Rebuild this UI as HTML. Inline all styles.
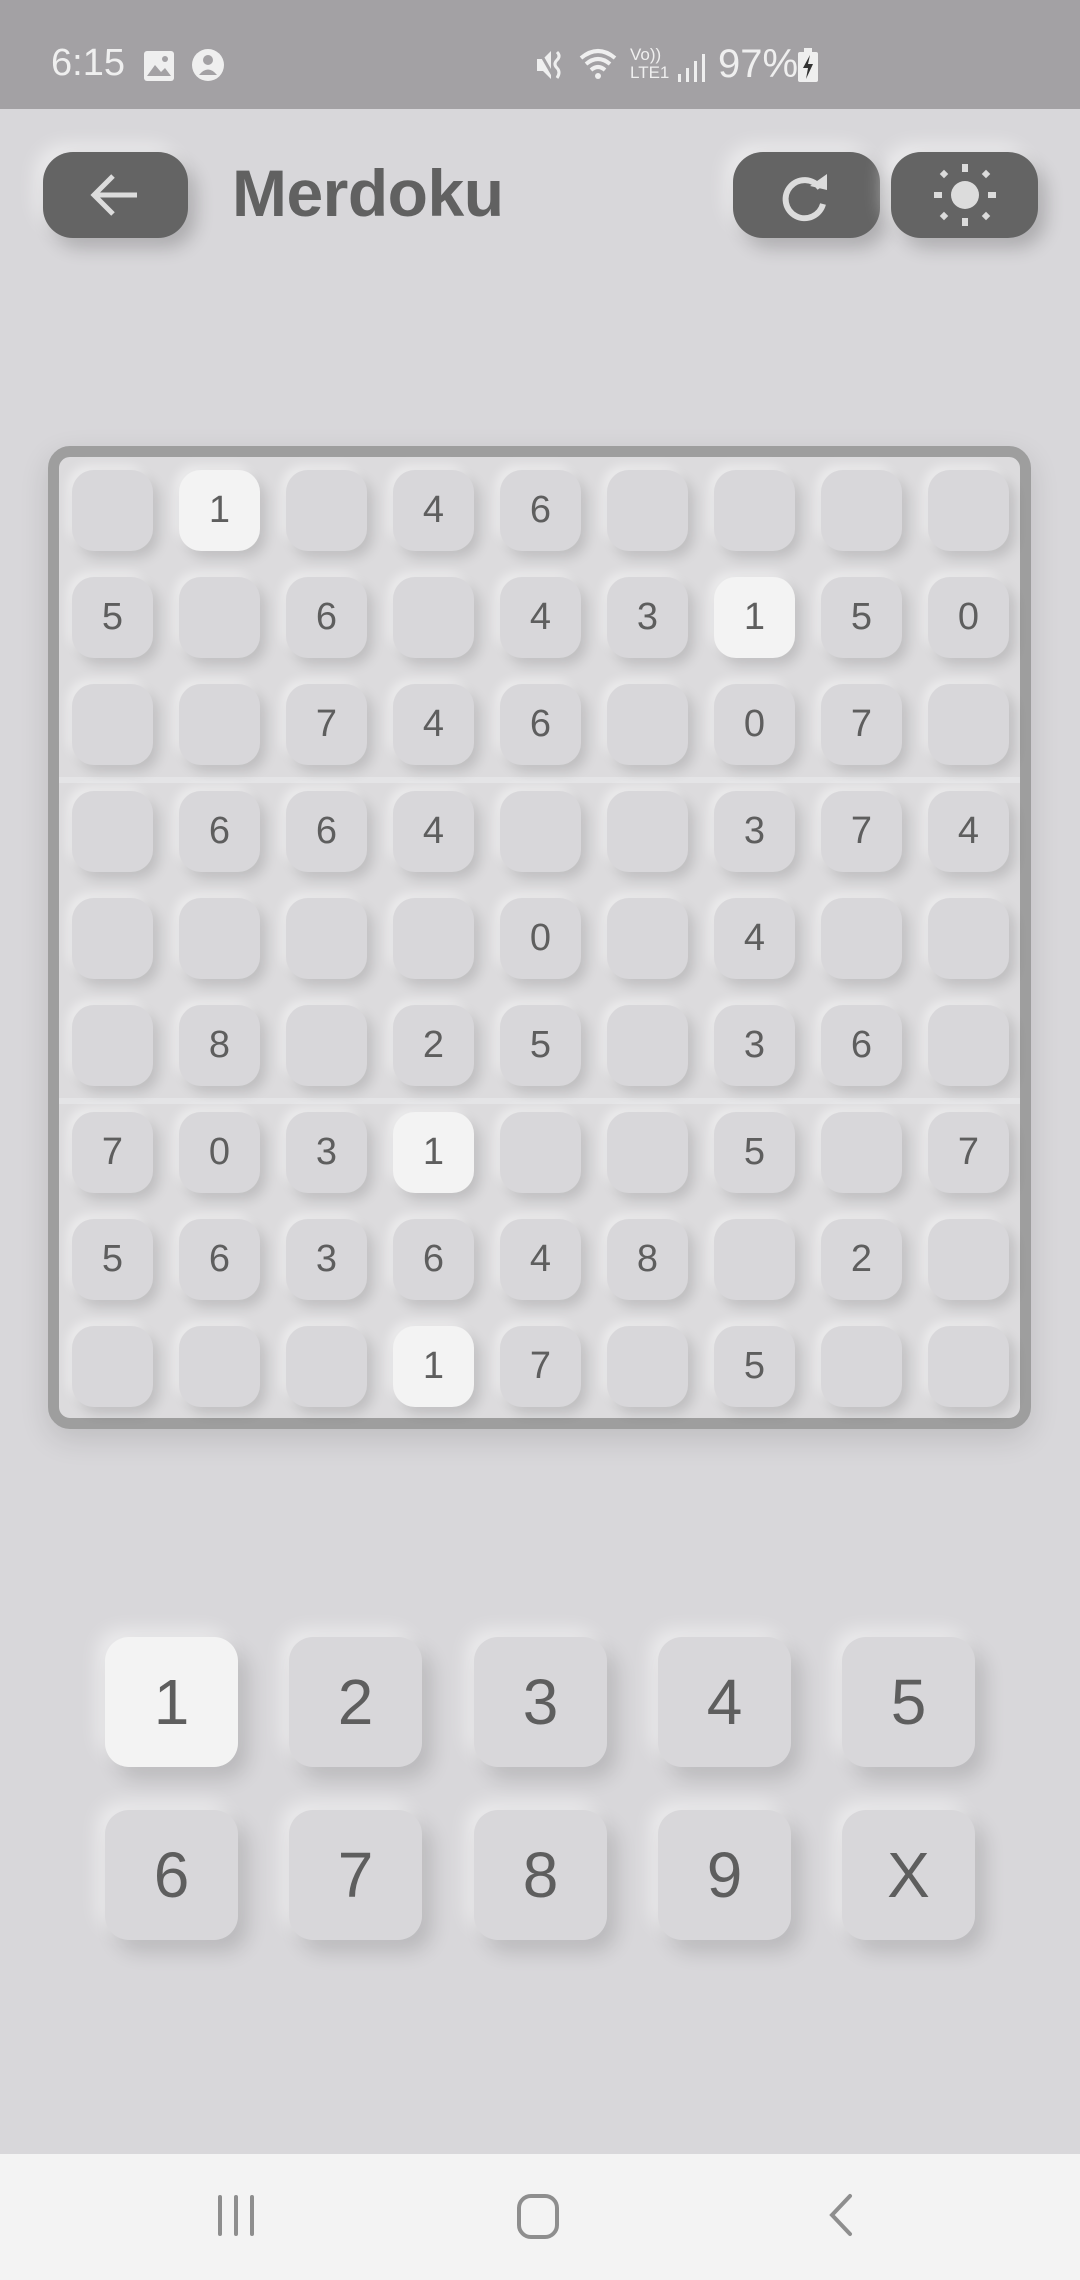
<!DOCTYPE html>
<html><head><meta charset="utf-8"><style>
*{margin:0;padding:0;box-sizing:border-box}
body{width:1080px;height:2280px;background:#d8d7da;position:relative;overflow:hidden;font-family:"Liberation Sans",Roboto,sans-serif;color:#616161}
.sb{position:absolute;left:0;top:0;width:1080px;height:109px;background:#a3a1a4;color:#efefef}
.hb{position:absolute;background:#646464;border-radius:30px;box-shadow:8px 10px 18px rgba(0,0,0,.2),-8px -8px 18px rgba(255,255,255,.5)}
.title{position:absolute;left:232px;top:155px;font-size:66px;font-weight:bold;color:#616161;letter-spacing:-0.5px}
.board{position:absolute;left:48px;top:446px;width:983px;height:983px;border:11px solid #9e9e9e;border-radius:22px;background:#dcdbdd;box-shadow:0 10px 30px rgba(0,0,0,.12)}
.sep{position:absolute;left:0;width:961px;height:6px;background:#e4e4e6}
.c{position:absolute;width:81px;height:81px;border-radius:22px;background:#d8d7da;box-shadow:6px 7px 12px rgba(0,0,0,.13),-5px -5px 10px rgba(255,255,255,.45);font-size:38px;display:flex;align-items:center;justify-content:center;color:#5e5e5e}
.c.w{background:#f3f3f3}
.k{position:absolute;width:133px;height:130px;border-radius:24px;background:#d8d7da;box-shadow:10px 12px 20px rgba(0,0,0,.14),-8px -8px 18px rgba(255,255,255,.5);font-size:64px;display:flex;align-items:center;justify-content:center;color:#5e5e5e}
.k.w{background:#f3f3f3}
.nav{position:absolute;left:0;top:2154px;width:1080px;height:126px;background:#f3f3f3}
</style></head><body>
<div class="sb">
<div style="position:absolute;left:51px;top:42px;font-size:38px;">6:15</div>
<svg style="position:absolute;left:143px;top:50px" width="32" height="32" viewBox="0 0 32 32"><rect x="1" y="1" width="30" height="30" rx="3" fill="#efefef"/><path d="M4 26 L12 15 L18 22 L22 18 L28 26Z" fill="#a3a1a4"/><circle cx="22" cy="9" r="3" fill="#a3a1a4"/></svg>
<svg style="position:absolute;left:191px;top:48px" width="34" height="34" viewBox="0 0 34 34"><circle cx="17" cy="17" r="16" fill="#efefef"/><circle cx="17" cy="12" r="5" fill="#a3a1a4"/><path d="M8 27 Q17 16 26 27Z" fill="#a3a1a4"/></svg>
<svg style="position:absolute;left:535px;top:48px" width="34" height="34" viewBox="0 0 34 34"><path d="M2 11 H8 L16 3 V31 L8 23 H2Z" fill="#efefef"/><path d="M4 3 L20 31" stroke="#a3a1a4" stroke-width="3"/><path d="M22 4 Q26 8 22 12 Q18 16 22 20 Q26 24 22 30" stroke="#efefef" stroke-width="3" fill="none"/></svg>
<svg style="position:absolute;left:578px;top:46px" width="42" height="38" viewBox="0 0 42 38"><path d="M3 12 Q20 -2 37 12 M8 18 Q20 8 32 18 M13 24 Q20 18 27 24" stroke="#efefef" stroke-width="4" fill="none"/><circle cx="20" cy="30" r="3" fill="#efefef"/></svg>
<div style="position:absolute;left:630px;top:46px;font-size:17px;line-height:18px">Vo))<br>LTE1</div>
<svg style="position:absolute;left:676px;top:52px" width="30" height="30" viewBox="0 0 30 30"><rect x="2" y="22" width="3" height="8" fill="#efefef"/><rect x="10" y="16" width="3" height="14" fill="#efefef"/><rect x="18" y="9" width="3" height="21" fill="#efefef"/><rect x="26" y="2" width="3" height="28" fill="#efefef"/></svg>
<div style="position:absolute;left:718px;top:42px;font-size:40px">97%</div>
<svg style="position:absolute;left:797px;top:48px" width="22" height="34" viewBox="0 0 22 34"><rect x="7" y="0" width="8" height="4" fill="#efefef"/><rect x="1" y="4" width="20" height="30" rx="2" fill="#efefef"/><path d="M13 7 L6 20 L11 20 L9 31 L16 16 L11 16Z" fill="#333"/></svg>
</div>

<div class="hb" style="left:43px;top:152px;width:145px;height:86px"><svg width="145" height="86" viewBox="0 0 145 86"><path d="M94 43 H52 M70 24 L51 43 L70 62" stroke="#dcdcdc" stroke-width="5" fill="none"/></svg></div>
<div class="title">Merdoku</div>
<div class="hb" style="left:733px;top:152px;width:147px;height:86px"><svg width="147" height="86" viewBox="0 0 147 86"><path d="M87 36 A19 19 0 1 0 90 52" stroke="#dcdcdc" stroke-width="6" fill="none"/><path d="M77 34 L94 22 L94 38Z" fill="#dcdcdc"/></svg></div>
<div class="hb" style="left:891px;top:152px;width:147px;height:86px"><svg width="147" height="86" viewBox="0 0 147 86"><circle cx="74" cy="43" r="14" fill="#dcdcdc"/><g fill="#dcdcdc"><rect x="71" y="12" width="6" height="8"/><rect x="71" y="66" width="6" height="8"/><rect x="43" y="40" width="8" height="6"/><rect x="97" y="40" width="8" height="6"/><rect x="50" y="19" width="6" height="6" transform="rotate(45 53 22)"/><rect x="92" y="19" width="6" height="6" transform="rotate(45 95 22)"/><rect x="50" y="61" width="6" height="6" transform="rotate(45 53 64)"/><rect x="92" y="61" width="6" height="6" transform="rotate(45 95 64)"/></g></svg></div>

<div class="board">
<div class="sep" style="top:320px"></div>
<div class="sep" style="top:641px"></div>
<div id="g"></div>
</div>

<div class="k w" style="left:105px;top:1637px">1</div>
<div class="k" style="left:289px;top:1637px">2</div>
<div class="k" style="left:474px;top:1637px">3</div>
<div class="k" style="left:658px;top:1637px">4</div>
<div class="k" style="left:842px;top:1637px">5</div>
<div class="k" style="left:105px;top:1810px">6</div>
<div class="k" style="left:289px;top:1810px">7</div>
<div class="k" style="left:474px;top:1810px">8</div>
<div class="k" style="left:658px;top:1810px">9</div>
<div class="k" style="left:842px;top:1810px">X</div>

<div class="nav">
<svg style="position:absolute;left:0;top:0" width="1080" height="126" viewBox="0 0 1080 126"><g stroke="#8e8e8e" stroke-width="4" stroke-linecap="round" fill="none"><path d="M220 43 V80 M236 43 V80 M252 43 V80"/><rect x="519" y="42" width="38" height="41" rx="12"/><path d="M850 42 L832 61 L850 80"/></g></svg>
</div>

<script>
var d=["_!_46____","5_6_43!50","__746_07_","_664__374","____0_4__","_8_25_36_","703!__5_7","563648_2_","___!7_5__"];
var g=document.getElementById('g'),h='';
for(var r=0;r<9;r++){for(var c=0;c<9;c++){var ch=d[r][c],w=ch=='!';var t=w?'1':(ch=='_'?'':ch);
h+='<div class="c'+(w?' w':'')+'" style="left:'+(13+c*107)+'px;top:'+(13+r*107)+'px">'+t+'</div>';}}
g.innerHTML=h;
</script>
</body></html>
